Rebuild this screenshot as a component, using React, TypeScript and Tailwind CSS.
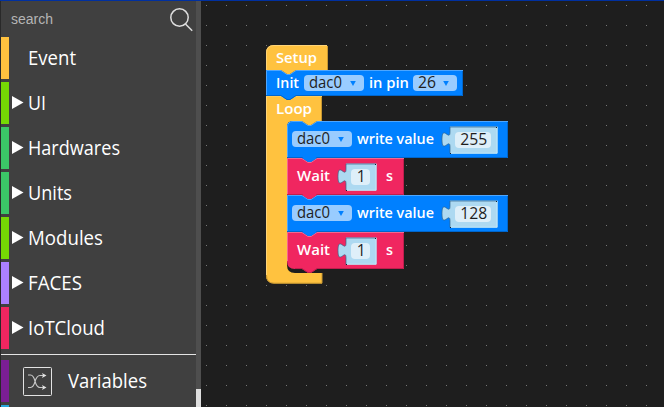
import React from "react";

const categories = [
  { name: "Event", color: "bg-[#ffc23f]", open: false, width: 48 },
  { name: "UI", color: "bg-[#76d804]", open: true, width: 18 },
  { name: "Hardwares", color: "bg-[#3bc667]", open: true, width: 92 },
  { name: "Units", color: "bg-[#3bc667]", open: true, width: 44 },
  { name: "Modules", color: "bg-[#76d804]", open: true, width: 75 },
  { name: "FACES", color: "bg-[#ac80ff]", open: true, width: 54 },
  { name: "IoTCloud", color: "bg-[#f02660]", open: true, width: 77 },
];

function Label({ text, width }: { text: string; width: number }) {
  return (
    <svg className="block h-[30px] w-[110px] shrink-0 overflow-visible" aria-label={text}>
      <text x="0" y="21" textLength={width} lengthAdjust="spacingAndGlyphs" className="fill-white font-['Open_Sans','Noto_Sans',sans-serif] text-[19.5px] font-medium">
        {text}
      </text>
    </svg>
  );
}

function Sidebar() {
  return (
    <aside className="flex h-full w-[201px] shrink-0 bg-[#404040]">
      <div className="w-px shrink-0 bg-[#292929]" />
      <div className="flex w-[195px] shrink-0 flex-col">
        <div className="flex h-9 shrink-0 items-center justify-between pr-[3px] pl-2.5">
          <span className="pb-px font-['Liberation_Sans',sans-serif] text-[14px] leading-5 text-[#b5b5b5]">search</span>
          <svg width="24" height="24" viewBox="0 0 24 24" fill="none" stroke="#dedede" strokeWidth="1.5" className="mt-0.5 shrink-0">
            <circle cx="10.5" cy="9.5" r="8.7" />
            <path d="M16.5 16L23.2 22.7" />
          </svg>
        </div>
        <nav className="flex shrink-0 flex-col gap-[3px]">
          {categories.map((c) => (
            <div key={c.name} className="flex h-[42px] shrink-0">
              <div className={`w-2 shrink-0 ${c.color}`} />
              <div className="flex w-[19px] shrink-0 pt-3.5 pl-[3px]">
                {c.open && (
                  <svg width="12" height="13" viewBox="0 0 12 13" className="shrink-0">
                    <path d="M0 0L11.5 6.5L0 13Z" fill="white" />
                  </svg>
                )}
              </div>
              <div className="pt-[7px]">
                <Label text={c.name} width={c.width} />
              </div>
            </div>
          ))}
        </nav>
        <div className="mt-[5px] h-px shrink-0 bg-[#e4e4e4]" />
        <div className="mt-[5px] flex h-[42px] shrink-0">
          <div className="w-2 shrink-0 bg-[#7b1e95]" />
          <svg width="29" height="29" viewBox="0 0 29 29" fill="none" stroke="#e3e3e3" className="mt-[7px] ml-3.5 shrink-0">
            <rect x="0.5" y="0.5" width="28" height="28" rx="1" />
            <path d="M5 8H7.5C13.5 8 10.5 20.5 17 20.5H22M5 20.5H7.5C13.5 20.5 10.5 8.5 17 8.5H22" strokeWidth="1.2" stroke="#c9c9c9" />
            <path d="M19 6L23.5 8.5L19 11L20 8.5ZM19 18L23.5 20.5L19 23L20 20.5Z" fill="#e3e3e3" stroke="none" />
          </svg>
          <div className="ml-4 pt-[7px]">
            <Label text="Variables" width={79} />
          </div>
        </div>
        <div className="mt-[3px] h-0.5 w-2 shrink-0 bg-[#28a5dc]" />
      </div>
      <div className="flex w-[5px] shrink-0 flex-col bg-[#4e4e4e] pt-[388px]">
        <div className="grow bg-[#dedede]" />
      </div>
    </aside>
  );
}

function BlockText({ x, y, width, children }: { x: number; y: number; width: number; children: string }) {
  return (
    <text x={x} y={y} textLength={width} lengthAdjust="spacingAndGlyphs" className="fill-white font-['Open_Sans','Noto_Sans',sans-serif] text-[15px] font-semibold">
      {children}
    </text>
  );
}

function Dropdown({ x, y, width, label, textWidth }: { x: number; y: number; width: number; label: string; textWidth: number }) {
  return (
    <g transform={`translate(${x} ${y})`}>
      <rect width={width} height="16" rx="4" fill="#99ccff" />
      <text x="5" y="13" textLength={textWidth} lengthAdjust="spacingAndGlyphs" className="fill-[#1e1e1e] font-['Open_Sans','Noto_Sans',sans-serif] text-[15.5px]">
        {label}
      </text>
      <path d={`M${width - 13.8} 6H${width - 8.2}L${width - 11} 11Z`} fill="#0080ff" />
    </g>
  );
}

function NumberInput({ x, y, width, value, textWidth }: { x: number; y: number; width: number; value: string; textWidth: number }) {
  return (
    <g transform={`translate(${x} ${y})`}>
      <path d={`M0 -0.5H${width}V26.5H0V20C0 10 -8 28 -8 12.5S0 15 0 5Z`} fill="#add9f1" />
      <path d={`M0.5 26.2H${width - 0.5}V0`} stroke="#c0e6f8" fill="none" />
      <path d={`M${width - 0.5} 0H0V5C0 15 -8 -3 -8 12.5S0 10 0 20V26.5`} stroke="#35658a" strokeWidth="0.7" fill="none" />
      <path d={`M${width - 1.5} 0H${width - 0.5}V1H${width - 1.5}ZM0 26H1V27H0Z`} fill="#102030" />
      <rect x="5" y="5" width={width - 11.5} height="16" rx="4" fill="#deeff9" />
      <text x={5.5 + (width - 11 - textWidth) / 2} y="18" textLength={textWidth} lengthAdjust="spacingAndGlyphs" className="fill-[#1e1e1e] font-['Open_Sans','Noto_Sans',sans-serif] text-[15.5px]">
        {value}
      </text>
    </g>
  );
}

function StatementShape({ x, y, width, height, color, light, dark, last = false, first = false }: { x: number; y: number; width: number; height: number; color: string; light: string; dark: string; last?: boolean; first?: boolean }) {
  const top = first ? "M0 6Q0 0 6 0H15L21 4H24L30 0" : "M0 0H15L21 4H24L30 0";
  const left = last ? `H8Q0 ${height} 0 ${height - 8}Z` : "H0Z";
  return (
    <g transform={`translate(${x} ${y})`}>
      <path d={`${top}H${width}V${height}H30L24 ${height + 4}H21L15 ${height}${left}`} fill={color} />
      <path d={`M0.5 ${last ? height - 8 : height}V${first ? 6 : 0.5}${first ? "Q0.5 0.5 6 0.5" : ""}H15L21 4.5H24L30 0.5H${width}`} fill="none" stroke={light} />
      <path d={`M${width - 0.5} 1V${height - 0.5}H30L24 ${height + 3.5}H21L15 ${height - 0.5}H${last ? 8 : 0}`} fill="none" stroke={dark} />
    </g>
  );
}

function Workspace() {
  return (
    <svg className="block h-full w-[463px] shrink-0 bg-[#1e1e1e]" viewBox="201 1 463 406">
      <defs>
        <pattern id="dots" x="206" y="5" width="20" height="20" patternUnits="userSpaceOnUse">
          <rect width="1" height="1" fill="#777777" />
        </pattern>
      </defs>
      <rect x="201" y="1" width="463" height="406" fill="url(#dots)" />

      <path d="M266 53Q266 45 274 45H327V70H266Z" fill="#ffc23f" />
      <path d="M266.5 70V53Q266.5 45.5 274 45.5H327" fill="none" stroke="#ffd477" />
      <path d="M327.5 46V70" stroke="#c79732" />
      <path d="M266 96H322V121H293Q287 121 287 127V265Q287 273 295 273H322V283.5H274Q266 283.5 266 275Z" fill="#ffc23f" />
      <path d="M266.5 275V96H322" fill="none" stroke="#ffd477" />
      <path d="M321.5 97V121M322 273V283.2H274Q266.5 283.2 266.5 275" fill="none" stroke="#c79732" />

      <StatementShape x={266} y={70} width={197} height={26} color="#0080ff" light="#4da6ff" dark="#0066cc" />
      <path d="M281 70L287 74H290L296 70Z" fill="#ffc23f" />
      <StatementShape x={287} y={121} width={221} height={37} color="#0080ff" light="#4da6ff" dark="#0066cc" first />
      <path d="M302 121L308 125H311L317 121Z" fill="#ffc23f" />
      <StatementShape x={287} y={158} width={117} height={37} color="#f02660" light="#f5678f" dark="#bf1e4d" />
      <path d="M302 158L308 162H311L317 158Z" fill="#0080ff" />
      <StatementShape x={287} y={195} width={221} height={37} color="#0080ff" light="#4da6ff" dark="#0066cc" />
      <path d="M302 195L308 199H311L317 195Z" fill="#f02660" />
      <StatementShape x={287} y={232} width={117} height={37} color="#f02660" light="#f5678f" dark="#bf1e4d" last />
      <path d="M302 232L308 236H311L317 232Z" fill="#0080ff" />

      <BlockText x={276} y={63} width={41}>Setup</BlockText>
      <BlockText x={276} y={88} width={23}>Init</BlockText>
      <Dropdown x={304} y={75} width={60} label="dac0" textWidth={33} />
      <BlockText x={369} y={88} width={40}>in pin</BlockText>
      <Dropdown x={413} y={75} width={44} label="26" textWidth={18} />
      <BlockText x={276} y={114} width={36}>Loop</BlockText>

      <Dropdown x={292} y={131} width={60} label="dac0" textWidth={33} />
      <BlockText x={357} y={144} width={77}>write value</BlockText>
      <NumberInput x={450} y={127} width={47.5} value="255" textWidth={27} />
      <BlockText x={297} y={181} width={33}>Wait</BlockText>
      <NumberInput x={346} y={164} width={30.5} value="1" textWidth={9} />
      <BlockText x={386} y={181} width={7}>s</BlockText>

      <Dropdown x={292} y={205} width={60} label="dac0" textWidth={33} />
      <BlockText x={357} y={218} width={77}>write value</BlockText>
      <NumberInput x={450} y={201} width={47.5} value="128" textWidth={27} />
      <BlockText x={297} y={255} width={33}>Wait</BlockText>
      <NumberInput x={346} y={238} width={30.5} value="1" textWidth={9} />
      <BlockText x={386} y={255} width={7}>s</BlockText>
    </svg>
  );
}

export default function App() {
  return (
    <div className="flex h-[407px] w-[664px] flex-col overflow-hidden bg-[#1e1e1e]">
      <div className="h-px shrink-0 bg-[#0030a0]" />
      <main className="flex h-[406px]">
        <Sidebar />
        <Workspace />
      </main>
    </div>
  );
}
